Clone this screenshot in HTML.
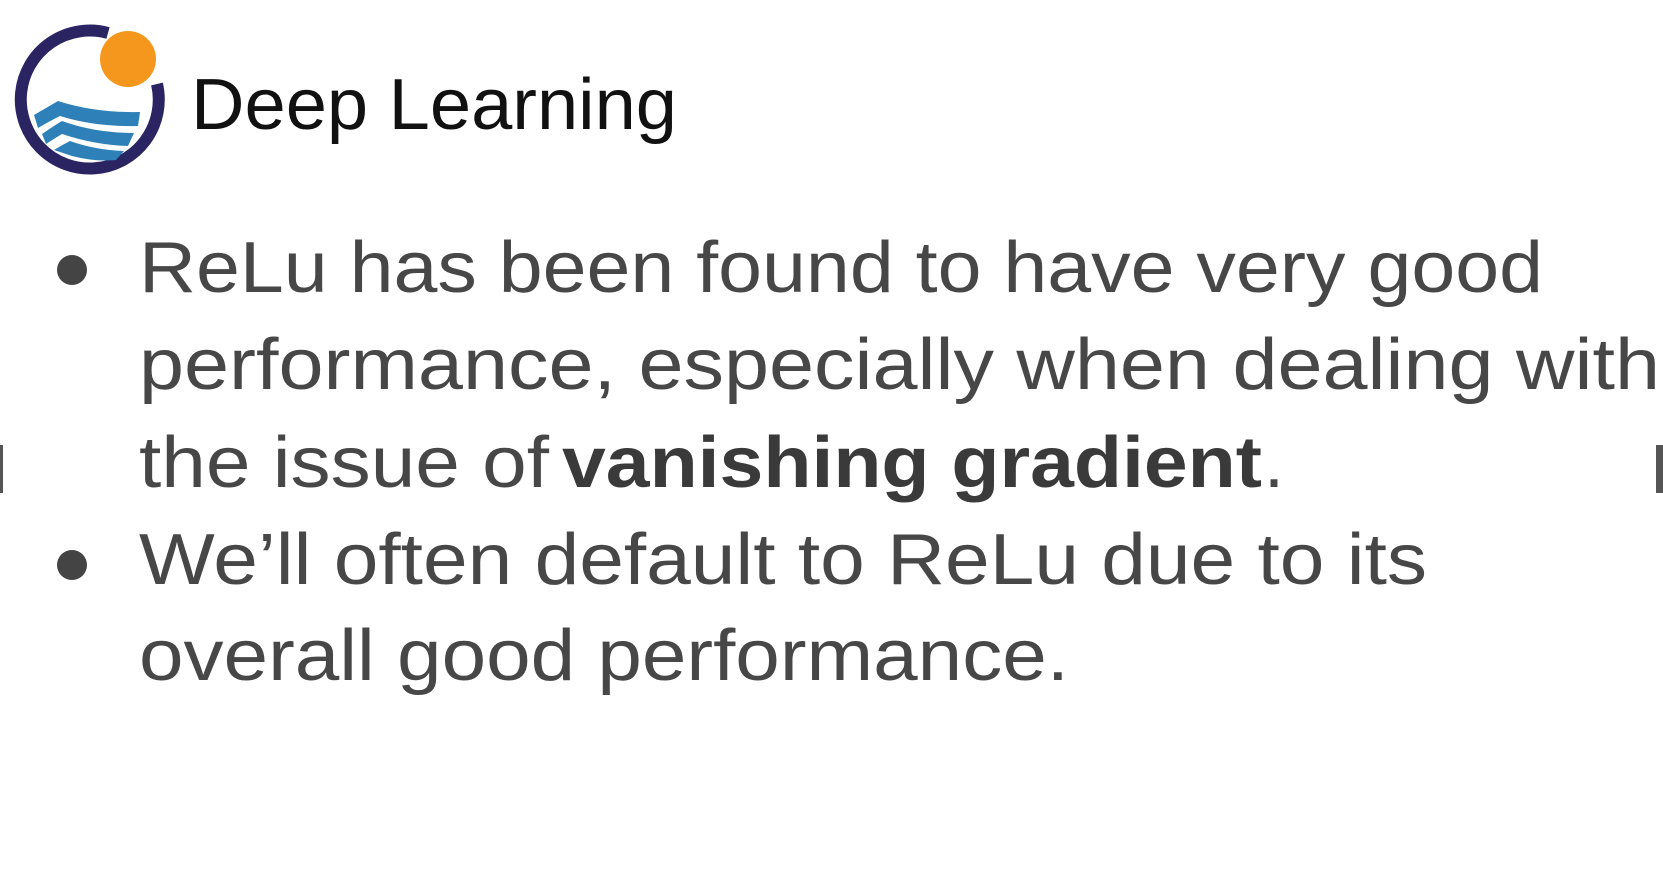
<!DOCTYPE html>
<html><head><meta charset="utf-8"><style>
html,body{margin:0;padding:0;background:#fff;width:1663px;height:896px;overflow:hidden}
svg{display:block}
</style></head><body>
<svg width="1663" height="896" viewBox="0 0 1663 896" xmlns="http://www.w3.org/2000/svg">
<rect width="1663" height="896" fill="#fff"/>
<!-- logo -->
<path d="M108 33 A69 69 0 1 0 157 84" fill="none" stroke="#2a2562" stroke-width="12"/>
<circle cx="128" cy="59" r="28" fill="#f5961d"/>
<path d="M34 115 Q46 108 58 101 Q95 113 140 112 L138 126 Q95 127 60 116 Q48 122 38 128 Z" fill="#2e80b8"/>
<path d="M42 134 Q52 127 62 121 Q95 133 134 133 L128 146 Q95 145 62 134 Q52 140 46 144 Z" fill="#2e80b8"/>
<path d="M54 150 Q62 145 70 141 Q95 150 124 151 L116 160 Q95 162 72 156 Z" fill="#2e80b8"/>
<text x="191" y="129" font-family="Liberation Sans, sans-serif" font-size="72" fill="#111" textLength="486" lengthAdjust="spacingAndGlyphs">Deep Learning</text>
<!-- bullets -->
<circle cx="72" cy="270" r="15" fill="#444"/>
<circle cx="72" cy="565" r="15" fill="#444"/>
<g font-family="Liberation Sans, sans-serif" font-size="72" fill="#474747">
<text x="139" y="292" textLength="1404" lengthAdjust="spacingAndGlyphs">ReLu has been found to have very good</text>
<text x="139" y="389" textLength="1521" lengthAdjust="spacingAndGlyphs">performance, especially when dealing with</text>
<text x="139" y="487" textLength="410" lengthAdjust="spacingAndGlyphs">the issue of</text>
<text x="562" y="487" font-weight="bold" fill="#3a3a3a" textLength="700" lengthAdjust="spacingAndGlyphs">vanishing gradient</text>
<text x="1264" y="487">.</text>
<text x="139" y="584" textLength="1288" lengthAdjust="spacingAndGlyphs">We’ll often default to ReLu due to its</text>
<text x="139" y="680" textLength="930" lengthAdjust="spacingAndGlyphs">overall good performance.</text>
</g>
<rect x="0" y="445" width="3" height="48" fill="#555"/>
<rect x="1656" y="445" width="7" height="48" fill="#555"/>
</svg>
</body></html>
